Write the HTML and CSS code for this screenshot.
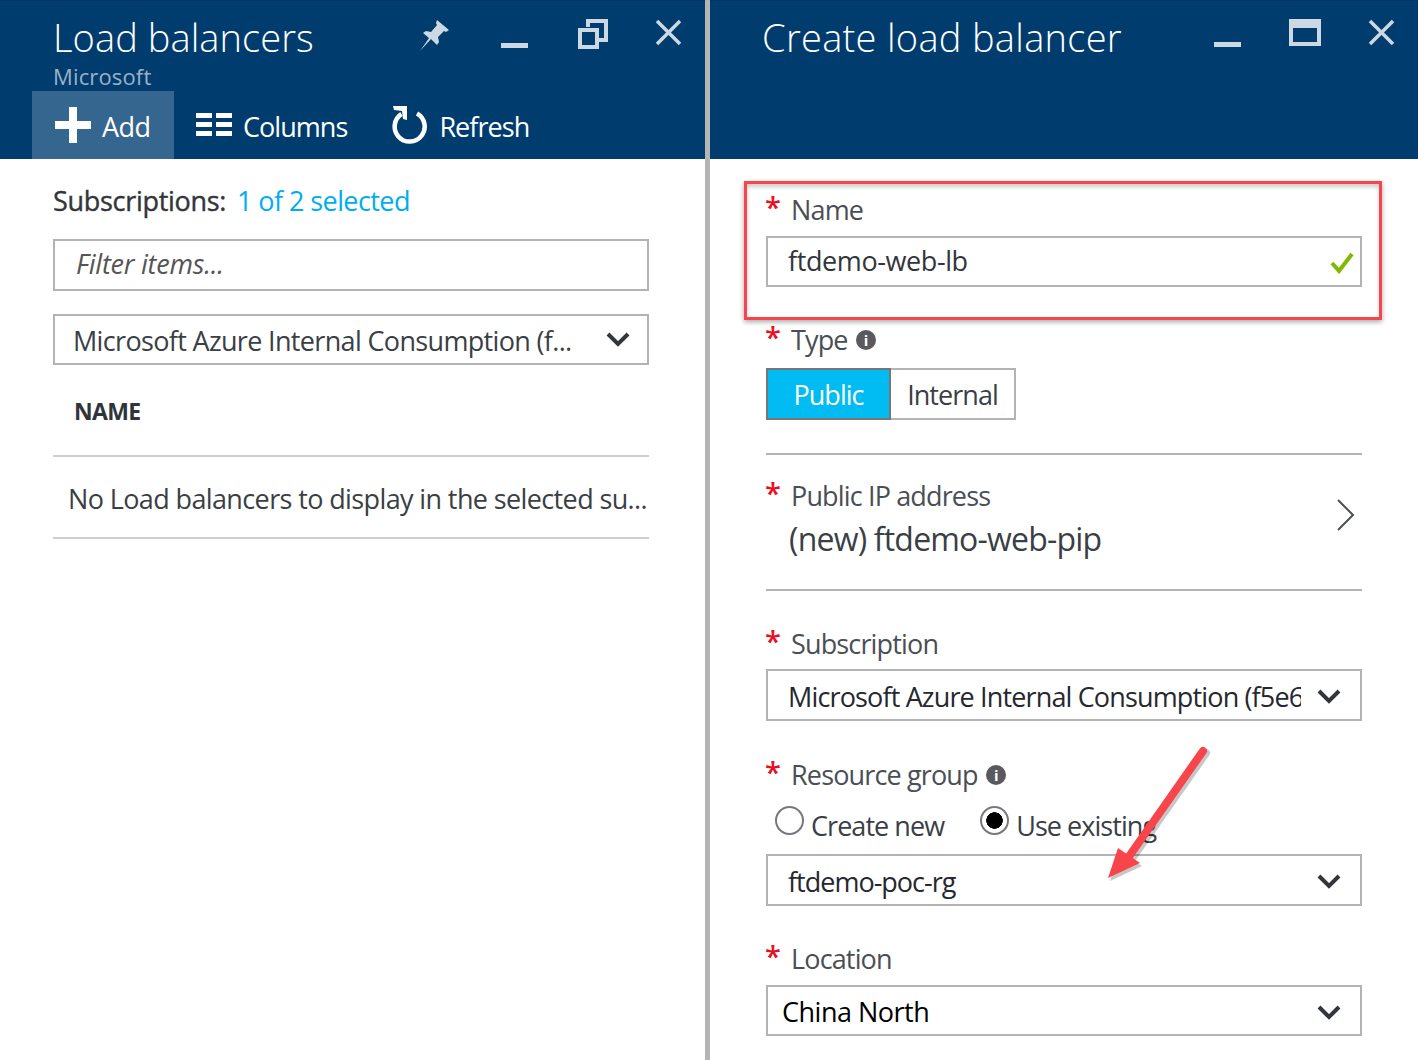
FILE: index.html
```html
<!DOCTYPE html>
<html lang="en">
<head>
<meta charset="utf-8">
<title>Create load balancer</title>
<link rel="stylesheet" href="styles.css">
</head>
<body>
<div class="app">
  <section class="blade blade-left">
    <header class="head">
      <div class="head-top">
        <div class="titles">
          <h1 class="title">Load balancers</h1>
          <div class="subtitle">Microsoft</div>
        </div>
        <div class="win win-left">
          <svg class="ico ico-pin" width="34" height="36" viewBox="0 0 34 36"><path class="pale" d="M20 3l12 10-3 2-2-1-6 6 1 5-2 3-6-6-11 12 9-13-6-5 3-2 5 1 6-7-1-2z"/></svg>
          <svg class="ico ico-min" width="30" height="36" viewBox="0 0 30 36"><rect class="pale" x="1" y="26" width="27" height="5"/></svg>
          <svg class="ico ico-rest" width="32" height="36" viewBox="0 0 32 36"><path class="line" d="M11 9V3h18v19h-8M3 12h17v17H3z"/></svg>
          <svg class="ico ico-close" width="30" height="36" viewBox="0 0 30 36"><path class="cross" d="M3 5l23 23M26 5L3 28"/></svg>
        </div>
      </div>
      <nav class="cmds">
        <div class="cmd cmd-on">
          <svg width="36" height="36" viewBox="0 0 36 36"><path class="solid" d="M14 0h8v14h14v8H22v14h-8V22H0v-8h14z"/></svg>
          <span>Add</span>
        </div>
        <div class="cmd">
          <svg width="36" height="24" viewBox="0 0 36 24"><path class="solid" d="M0 0h16v5H0zM20 0h16v5H20zM0 9h16v5H0zM20 9h16v5H20zM0 18h16v5H0zM20 18h16v5H20z"/></svg>
          <span>Columns</span>
        </div>
        <div class="cmd">
          <svg width="36" height="38" viewBox="0 0 36 38"><path class="ring" d="M25 7.500a15 15 0 1 1-15.500 0.500"/><path class="solid" d="M1 0h14v14l-4-1-1-8-8-1z"/></svg>
          <span>Refresh</span>
        </div>
      </nav>
    </header>
    <div class="body-left">
      <div class="subs"><strong>Subscriptions:</strong> <a class="link">1 of 2 selected</a></div>
      <div class="box box-filter"><em>Filter items...</em></div>
      <div class="box box-sub">
        <span>Microsoft Azure Internal Consumption (f...</span>
        <svg class="chev" width="24" height="16" viewBox="0 0 24 16"><path d="M2 3l10 10L22 3"/></svg>
      </div>
      <div class="col-head">NAME</div>
      <div class="empty">No Load balancers to display in the selected su...</div>
    </div>
  </section>

  <section class="blade blade-right">
    <header class="head">
      <div class="head-top">
        <div class="titles"><h1 class="title title-wide">Create load balancer</h1></div>
        <div class="win win-right">
          <svg class="ico" width="30" height="36" viewBox="0 0 30 36"><rect class="pale" x="1" y="26" width="27" height="5"/></svg>
          <svg class="ico" width="34" height="36" viewBox="0 0 34 36"><path class="pale" fill-rule="evenodd" d="M1 3h32v27H1zM5 12v14h24V12z"/></svg>
          <svg class="ico" width="30" height="36" viewBox="0 0 30 36"><path class="cross" d="M3 5l23 23M26 5L3 28"/></svg>
        </div>
      </div>
    </header>
    <form class="form">
      <div class="label lab-name"><i>*</i>Name</div>
      <div class="box field field-name">
        <span>ftdemo-web-lb</span>
        <svg class="check" width="24" height="22" viewBox="0 0 24 22"><path d="M2 11l7 8L22 2"/></svg>
      </div>

      <div class="label lab-type"><i>*</i>Type<b class="info">i</b></div>
      <div class="seg">
        <span class="seg-on">Public</span><span class="seg-off">Internal</span>
      </div>

      <div class="ip-row">
        <div>
          <div class="label"><i>*</i>Public IP address</div>
          <div class="ip-value">(new) ftdemo-web-pip</div>
        </div>
        <svg class="next" width="20" height="34" viewBox="0 0 20 34"><path d="M2 2l15 15L2 32"/></svg>
      </div>

      <div class="label lab-sub"><i>*</i>Subscription</div>
      <div class="box field select field-sub">
        <span class="clip narrow">Microsoft Azure Internal Consumption (f5e6</span>
        <svg class="chev" width="24" height="16" viewBox="0 0 24 16"><path d="M2 3l10 10L22 3"/></svg>
      </div>

      <div class="label lab-rg"><i>*</i>Resource group<b class="info">i</b></div>
      <div class="radios">
        <span class="radio"></span><span class="radio-text">Create new</span>
        <span class="radio radio-on"></span><span class="radio-text">Use existing</span>
      </div>
      <div class="box field select field-rg">
        <span class="narrow narrow-rg">ftdemo-poc-rg</span>
        <svg class="chev" width="24" height="16" viewBox="0 0 24 16"><path d="M2 3l10 10L22 3"/></svg>
      </div>

      <div class="label lab-loc"><i>*</i>Location</div>
      <div class="box field select field-loc">
        <span>China North</span>
        <svg class="chev" width="24" height="16" viewBox="0 0 24 16"><path d="M2 3l10 10L22 3"/></svg>
      </div>
    </form>
  </section>
</div>

<div class="callout"></div>
<svg class="arrow" width="120" height="150" viewBox="0 0 120 150">
  <path class="arrow-shadow" d="M106 8L33 112"/>
  <path class="arrow-head-shadow" d="M10 136L20 106 42 121z"/>
  <path class="arrow-line" d="M103 6L30 110"/>
  <path class="arrow-head" d="M8 133L18 103 40 118z"/>
</svg>
</body>
</html>
```

FILE: styles.css
```css
* { box-sizing: border-box; }
html, body { margin: 0; height: 100%; overflow: hidden; background: #fff; }
body { font-family: "Open Sans", "Noto Sans", sans-serif; color: #3a3f45; position: relative; }

.app { display: flex; height: 1060px; }
.blade { flex: none; }
.blade-left { width: 710px; border-right: 5px solid #b4b4b4; }
.blade-right { width: 708px; }

.head { height: 159px; background: #003c6e; border-top: 1px solid #00335f; color: #fff; overflow: hidden; }
.head-top { display: flex; justify-content: space-between; height: 90px; }
.titles { padding: 15px 0 0 53px; }
.blade-right .titles { padding-left: 52px; }
.title { margin: 0; font-size: 38px; line-height: 42px; font-weight: 300; letter-spacing: 0.08px; color: #fff; white-space: nowrap; }
.title-wide { letter-spacing: 0.3px; }
.subtitle { margin-top: 5px; font-size: 22px; line-height: 26px; letter-spacing: 0.15px; color: #9bb2c6; }

.win { display: flex; align-items: flex-start; padding-top: 15px; }
.win-left { width: 288px; padding-right: 21px; }
.win-right { gap: 45px; padding-right: 21px; }
.ico { flex: none; }
.ico-pin { margin-top: 1px; }
.ico-min { margin: 1px 0 0 49px; }
.ico-rest { margin: 2px 0 0 47px; }
.ico-close { margin-left: 45px; }
.pale { fill: #ccd8e2; }
.line { fill: none; stroke: #ccd8e2; stroke-width: 4; }
.cross { fill: none; stroke: #ccd8e2; stroke-width: 3.500; }

.cmds { display: flex; margin-left: 32px; height: 68px; }
.cmd { display: flex; align-items: center; gap: 11px; padding: 2px 22px 0; font-size: 27px; letter-spacing: -0.95px; color: #fff; white-space: nowrap; }
.cmd svg { flex: none; margin-top: -2px; }
.cmd-on { background: #35668f; width: 142px; padding: 2px 0 0 23px; letter-spacing: -0.55px; }
.cmd:nth-child(3) { padding-left: 23px; }
.solid { fill: #fff; }
.ring { fill: none; stroke: #fff; stroke-width: 4.500; }

.body-left { padding: 24px 56px 0 53px; }
.subs { font-size: 27px; line-height: 36px; white-space: nowrap; color: #32363b; }
.subs strong { font-weight: 400; letter-spacing: -0.3px; -webkit-text-stroke: 0.4px #32363b; margin-right: 4px; }
.link { color: #00aeef; letter-spacing: -0.58px; }
.box { display: flex; align-items: center; justify-content: space-between; border: 2px solid #b3b3b3; background: #fff; height: 52px; white-space: nowrap; }
.box-filter { margin-top: 20px; padding: 0 0 4px 21px; font-size: 27px; letter-spacing: -0.22px; color: #555; }
.box-sub { margin-top: 23px; padding: 2px 17px 0 18px; font-size: 27px; letter-spacing: -0.66px; height: 51px; color: #3a3f45; }
.box-sub .chev { margin-top: -4px; }
.col-head { height: 92px; padding: 33px 0 0 21px; font-size: 23px; line-height: 26px; font-weight: 700; letter-spacing: -0.65px; color: #2f343a; border-bottom: 2px solid #cfcfcf; }
.empty { height: 82px; padding: 2px 0 0 15px; display: flex; align-items: center; font-size: 27px; letter-spacing: -0.62px; white-space: nowrap; border-bottom: 2px solid #cfcfcf; color: #3a3f45; }

.chev { fill: none; stroke: #32363b; stroke-width: 4; flex: none; }
.chev path { fill: none; }

.form { padding: 0 56px; }
.label { position: relative; padding-left: 25px; font-size: 27px; line-height: 36px; letter-spacing: -0.85px; color: #4a4f55; white-space: nowrap; display: flex; align-items: center; }
.label i { position: absolute; left: -1px; top: -3px; font-style: normal; font-weight: 600; font-size: 29px; line-height: 36px; color: #e81123; }
.lab-name { margin-top: 33px; }
.field { margin-top: 8px; height: 51px; padding: 0 0 2px 21px; font-size: 27px; letter-spacing: -0.4px; color: #32363b; }
.field-name { padding-left: 20px; }
.check { fill: none; stroke: #7fba00; stroke-width: 4; margin: 4px 6px 0 0; flex: none; }
.lab-type { margin-top: 35px; }
.info { display: inline-flex; align-items: center; justify-content: center; margin-left: 8px; width: 20px; height: 20px; border-radius: 50%; background: #59595f; color: #fff; font-size: 15px; line-height: 1; font-weight: 700; }
.seg { display: flex; margin-top: 10px; height: 52px; font-size: 27px; letter-spacing: -0.95px; }
.seg span { display: flex; align-items: center; justify-content: center; }
.seg-on { width: 125px; background: #00bcf2; color: #fff; border: 2px solid #767676; }
.seg-off { width: 125px; border: 2px solid #b3b3b3; border-left: 0; color: #3a3f45; }
.ip-row { display: flex; justify-content: space-between; align-items: center; margin-top: 33px; height: 138px; border-top: 2px solid #b3b3b3; border-bottom: 2px solid #b3b3b3; padding: 0 6px 5px 0; }
.ip-value { padding-left: 23px; margin-top: 3px; font-size: 32px; line-height: 44px; letter-spacing: -0.8px; color: #3a3f45; white-space: nowrap; }
.next { fill: none; stroke: #4a4f55; stroke-width: 2; flex: none; margin-bottom: 10px; }
.lab-sub { margin-top: 35px; }
.select { padding: 2px 19px 0 20px; margin-top: 7px; }
.field-sub { height: 52px; }
.clip { width: 513px; overflow: hidden; }
.narrow { letter-spacing: -0.85px; color: #25292e; }
.narrow-rg { letter-spacing: -1px; }
.lab-rg { margin-top: 36px; }
.radios { display: flex; align-items: center; padding: 1px 0 0 9px; height: 44px; margin-top: 10px; font-size: 27px; letter-spacing: -0.95px; }
.radio { flex: none; width: 29px; height: 29px; margin-top: -10px; border: 2px solid #77777d; border-radius: 50%; background: #fff; }
.radio-on { margin-left: 36px; background: radial-gradient(circle, #000 0 8px, #fff 8.500px); }
.radio-text { margin-left: 7px; }
.field-rg { height: 52px; margin-top: 7px; }
.lab-loc { margin-top: 35px; }
.field-loc { padding-left: 14px; color: #000; margin-top: 8px; letter-spacing: -0.5px; }

.callout { position: absolute; left: 744px; top: 181px; width: 638px; height: 139px; border: 3px solid #f8444b; box-shadow: 0 2px 5px rgba(0,0,0,.35), inset 0 3px 4px rgba(0,0,0,.2); }
.arrow { position: absolute; left: 1100px; top: 745px; }
.arrow-line { fill: none; stroke: #f8444b; stroke-width: 8; stroke-linecap: round; }
.arrow-shadow { fill: none; stroke: rgba(0,0,0,.22); stroke-width: 8; stroke-linecap: round; }
.arrow-head { fill: #f8444b; }
.arrow-head-shadow { fill: rgba(0,0,0,.22); }
```
